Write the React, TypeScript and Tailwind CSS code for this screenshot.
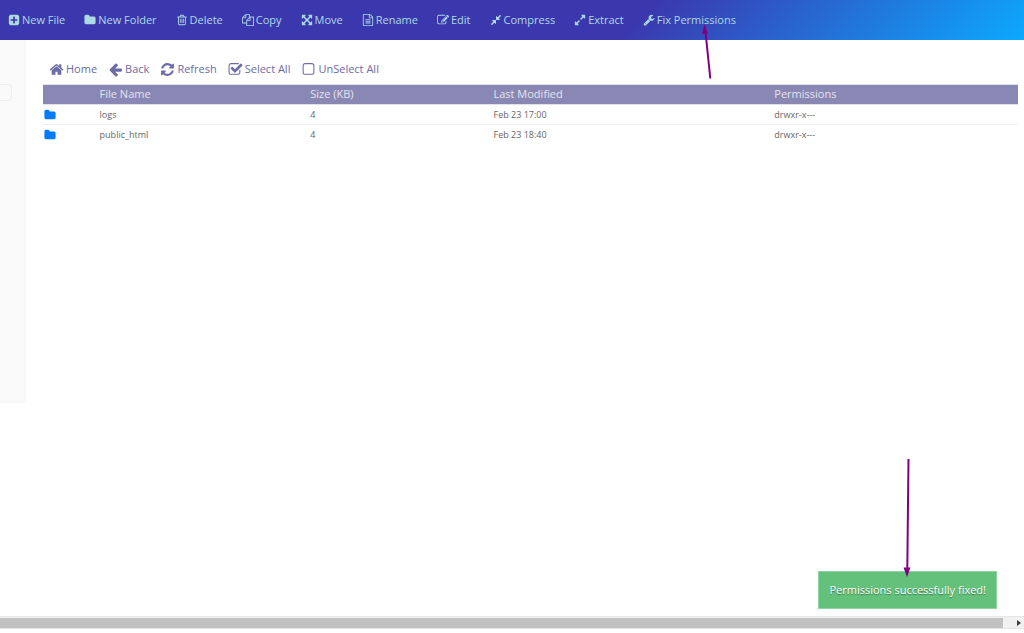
import { useState } from "react";

const paths = {
  plusSquare: "M1408 960v-128q0-26-19-45t-45-19h-320v-320q0-26-19-45t-45-19h-128q-26 0-45 19t-19 45v320h-320q-26 0-45 19t-19 45v128q0 26 19 45t45 19h320v320q0 26 19 45t45 19h128q26 0 45-19t19-45v-320h320q26 0 45-19t19-45zm256-544v960q0 119-84.5 203.5t-203.5 84.5h-960q-119 0-203.5-84.5t-84.5-203.5v-960q0-119 84.5-203.5t203.5-84.5h960q119 0 203.5 84.5t84.5 203.5z",
  folder: "M1728 608v704q0 92-66 158t-158 66h-1216q-92 0-158-66t-66-158v-960q0-92 66-158t158-66h320q92 0 158 66t66 158v32h672q92 0 158 66t66 158z",
  trash: "M704 736v576q0 14-9 23t-23 9h-64q-14 0-23-9t-9-23v-576q0-14 9-23t23-9h64q14 0 23 9t9 23zm256 0v576q0 14-9 23t-23 9h-64q-14 0-23-9t-9-23v-576q0-14 9-23t23-9h64q14 0 23 9t9 23zm256 0v576q0 14-9 23t-23 9h-64q-14 0-23-9t-9-23v-576q0-14 9-23t23-9h64q14 0 23 9t9 23zm128 724v-948h-896v948q0 22 7 40.5t14.5 27 10.5 8.5h832q3 0 10.5-8.5t14.5-27 7-40.5zm-672-1076h448l-48-117q-7-9-17-11h-317q-10 2-17 11zm928 32v64q0 14-9 23t-23 9h-96v948q0 83-47 143.5t-113 60.5h-832q-66 0-113-58.5t-47-141.5v-952h-96q-14 0-23-9t-9-23v-64q0-14 9-23t23-9h309l70-167q15-37 54-63t79-26h320q40 0 79 26t54 63l70 167h309q14 0 23 9t9 23z",
  copy: "M1696 384q40 0 68 28t28 68v1216q0 40-28 68t-68 28h-960q-40 0-68-28t-28-68v-288h-544q-40 0-68-28t-28-68v-672q0-40 20-88t48-76l408-408q28-28 76-48t88-20h416q40 0 68 28t28 68v328q68-40 128-40h416zm-544 213l-299 299h299v-299zm-640-384l-299 299h299v-299zm196 647l316-316v-416h-384v416q0 40-28 68t-68 28h-416v640h512v-256q0-40 20-88t48-76zm956 804v-1152h-384v416q0 40-28 68t-68 28h-416v640h896z",
  move: "M1411 541l-355 355 355 355 144-144q29-31 70-14 39 17 39 59v448q0 26-19 45t-45 19h-448q-42 0-59-40-17-39 14-69l144-144-355-355-355 355 144 144q31 30 14 69-17 40-59 40h-448q-26 0-45-19t-19-45v-448q0-42 40-59 39-17 69 14l144 144 355-355-355-355-144 144q-19 19-45 19-12 0-24-5-40-17-40-59v-448q0-26 19-45t45-19h448q42 0 59 40 17 39-14 69l-144 144 355 355 355-355-144-144q-31-30-14-69 17-40 59-40h448q26 0 45 19t19 45v448q0 42-39 59-13 5-25 5-26 0-45-19z",
  fileText: "M1596 380q28 28 48 76t20 88v1152q0 40-28 68t-68 28h-1344q-40 0-68-28t-28-68v-1600q0-40 28-68t68-28h896q40 0 88 20t76 48zm-444-244v376h376q-10-29-22-41l-313-313q-12-12-41-22zm384 1528v-1024h-416q-40 0-68-28t-28-68v-416h-768v1536h1280zm-1024-864q0-14 9-23t23-9h704q14 0 23 9t9 23v64q0 14-9 23t-23 9h-704q-14 0-23-9t-9-23v-64zm736 224q14 0 23 9t9 23v64q0 14-9 23t-23 9h-704q-14 0-23-9t-9-23v-64q0-14 9-23t23-9h704zm0 256q14 0 23 9t9 23v64q0 14-9 23t-23 9h-704q-14 0-23-9t-9-23v-64q0-14 9-23t23-9h704z",
  edit: "M888 1184l116-116-152-152-116 116v56h96v96h56zm440-720q-16-16-33 1l-350 350q-17 17-1 33t33-1l350-350q17-17 1-33zm80 594v190q0 119-84.5 203.5t-203.5 84.5h-832q-119 0-203.5-84.5t-84.5-203.5v-832q0-119 84.5-203.5t203.5-84.5h832q63 0 117 25 15 7 18 23 3 17-9 29l-49 49q-14 14-32 8-23-6-45-6h-832q-66 0-113 47t-47 113v832q0 66 47 113t113 47h832q66 0 113-47t47-113v-126q0-13 9-22l64-64q15-15 35-7t20 29zm-96-738l288 288-672 672h-288v-288zm444 132l-92 92-288-288 92-92q28-28 68-28t68 28l152 152q28 28 28 68t-28 68z",
  compress: "M896 960v448q0 26-19 45t-45 19-45-19l-144-144-332 332q-10 10-23 10t-23-10l-114-114q-10-10-10-23t10-23l332-332-144-144q-19-19-19-45t19-45 45-19h448q26 0 45 19t19 45zm755-672q0 13-10 23l-332 332 144 144q19 19 19 45t-19 45-45 19h-448q-26 0-45-19t-19-45v-448q0-26 19-45t45-19 45 19l144 144 332-332q10-10 23-10t23 10l114 114q10 10 10 23z",
  expand: "M883 1056q0 13-10 23l-332 332 144 144q19 19 19 45t-19 45-45 19h-448q-26 0-45-19t-19-45v-448q0-26 19-45t45-19 45 19l144 144 332-332q10-10 23-10t23 10l114 114q10 10 10 23zm781-864v448q0 26-19 45t-45 19-45-19l-144-144-332 332q-10 10-23 10t-23-10l-114-114q-10-10-10-23t10-23l332-332-144-144q-19-19-19-45t19-45 45-19h448q26 0 45 19t19 45z",
  wrench: "M448 1472q0-26-19-45t-45-19-45 19-19 45 19 45 45 19 45-19 19-45zm644-420l-682 682q-37 37-90 37-52 0-91-37l-106-108q-38-36-38-90 0-53 38-91l681-681q39 98 114.5 173.5t173.5 114.5zm634-435q0 39-23 106-47 134-164.5 217.5t-258.5 83.5q-185 0-316.5-131.5t-131.5-316.5 131.5-316.5 316.5-131.5q58 0 121.5 16.5t107.5 46.5q16 11 16 28t-16 28l-293 169v224l193 107q5-3 79-48.5t135.5-81 70.5-35.5q15 0 23.5 10t8.5 25z",
  home: "M1472 992v480q0 26-19 45t-45 19h-384v-384h-256v384h-384q-26 0-45-19t-19-45v-480q0-1 .5-3t.5-3l575-474 575 474q1 2 1 6zm223-69l-62 74q-8 9-21 11h-3q-13 0-21-7l-692-577-692 577q-12 8-24 7-13-2-21-11l-62-74q-8-10-7-23.5t11-21.5l719-599q32-26 76-26t76 26l244 204v-195q0-14 9-23t23-9h192q14 0 23 9t9 23v408l219 182q10 8 11 21.5t-7 23.5z",
  back: "M1664 896v128q0 53-32.5 90.5t-84.5 37.5h-704l293 294q38 36 38 90t-38 90l-75 76q-37 37-90 37-52 0-91-37l-651-652q-37-37-37-90 0-52 37-91l651-650q38-38 91-38 52 0 90 38l75 74q38 38 38 91t-38 91l-293 293h704q52 0 84.5 37.5t32.5 90.5z",
  refresh: "M1639 1056q0 5-1 7-64 268-268 434.5t-478 166.5q-146 0-282.5-55t-243.5-157l-129 129q-19 19-45 19t-45-19-19-45v-448q0-26 19-45t45-19h448q26 0 45 19t19 45-19 45l-137 137q71 66 161 102t187 36q134 0 250-65t186-179q11-17 53-117 8-23 30-23h192q13 0 22.5 9.5t9.5 22.5zm25-800v448q0 26-19 45t-45 19h-448q-26 0-45-19t-19-45 19-45l138-138q-148-137-349-137-134 0-250 65t-186 179q-11 17-53 117-8 23-30 23h-199q-13 0-22.5-9.5t-9.5-22.5v-7q65-268 270-434.5t480-166.5q146 0 284 55.5t245 156.5l130-129q19-19 45-19t45 19 19 45z",
  checkSquare: "M1472 930v318q0 119-84.5 203.5t-203.5 84.5h-832q-119 0-203.5-84.5t-84.5-203.5v-832q0-119 84.5-203.5t203.5-84.5h832q63 0 117 25 15 7 18 23 3 17-9 29l-49 49q-10 10-23 10-3 0-9-2-23-6-45-6h-832q-66 0-113 47t-47 113v832q0 66 47 113t113 47h832q66 0 113-47t47-113v-254q0-13 9-22l64-64q10-10 23-10 6 0 12 3 20 8 20 29zm231-489l-814 814q-24 24-57 24t-57-24l-430-430q-24-24-24-57t24-57l110-110q24-24 57-24t57 24l263 263 647-647q24-24 57-24t57 24l110 110q24 24 24 57t-24 57z",
  square: "M1312 256h-832q-66 0-113 47t-47 113v832q0 66 47 113t113 47h832q66 0 113-47t47-113v-832q0-66-47-113t-113-47zm288 160v832q0 119-84.5 203.5t-203.5 84.5h-832q-119 0-203.5-84.5t-84.5-203.5v-832q0-119 84.5-203.5t203.5-84.5h832q119 0 203.5 84.5t84.5 203.5z",
};

type IconName = keyof typeof paths;

const menu: { icon: IconName; label: string }[] = [
  { icon: "plusSquare", label: "New File" },
  { icon: "folder", label: "New Folder" },
  { icon: "trash", label: "Delete" },
  { icon: "copy", label: "Copy" },
  { icon: "move", label: "Move" },
  { icon: "fileText", label: "Rename" },
  { icon: "edit", label: "Edit" },
  { icon: "compress", label: "Compress" },
  { icon: "expand", label: "Extract" },
  { icon: "wrench", label: "Fix Permissions" },
];

const tools: { icon: IconName; label: string }[] = [
  { icon: "home", label: "Home" },
  { icon: "back", label: "Back" },
  { icon: "refresh", label: "Refresh" },
  { icon: "checkSquare", label: "Select All" },
  { icon: "square", label: "UnSelect All" },
];

const files = [
  { name: "logs", size: 4, modified: "Feb 23 17:00", permissions: "drwxr-x---" },
  { name: "public_html", size: 4, modified: "Feb 23 18:40", permissions: "drwxr-x---" },
];

function Icon({ name, className }: { name: IconName; className: string }) {
  return (
    <svg viewBox="0 0 1792 1792" fill="currentColor" aria-hidden="true" className={className}>
      <path d={paths[name]} />
    </svg>
  );
}

export default function App() {
  const [path, setPath] = useState("");

  return (
    <div className="relative flex min-h-screen flex-col bg-white font-['Open_Sans','Noto_Sans',sans-serif] text-[11px]">
      <nav className="flex h-10 items-center gap-[19px] bg-[linear-gradient(135deg,#3b38ae_0%,#3b38ae_62%,#0ca9ff_100%)] px-2 text-[#add8e6]">
        {menu.map((item) => (
          <button key={item.label} type="button" className="flex items-center gap-0.5 whitespace-nowrap">
            <Icon name={item.icon} className="size-3" />
            {item.label}
          </button>
        ))}
      </nav>

      <div className="flex flex-1 items-start">
        <aside className="h-[363px] w-[26px] shrink-0 bg-[#f9f9f9] pt-11">
          <input
            type="text"
            aria-label="Path"
            value={path}
            onChange={(e) => setPath(e.target.value)}
            className="block h-[17px] w-3 rounded-r-sm border border-l-0 border-[#efefef]"
          />
        </aside>

        <main className="min-w-0 flex-1 pr-1.5 pl-[17px]">
          <div className="flex h-11 items-center gap-[11px] px-1.5 pt-3.5 text-[#6c6ba6]">
            {tools.map((tool) => (
              <button key={tool.label} type="button" className="flex items-center gap-0.5 whitespace-nowrap">
                <Icon name={tool.icon} className="size-[15px]" />
                {tool.label}
              </button>
            ))}
          </div>

          <table className="w-full table-fixed border-collapse text-left">
            <thead>
              <tr className="h-5 border-y border-[#dee2e6] bg-[#8988b5] text-[#e4e4ee]">
                <th className="w-[5.6%] p-0" aria-label="Type" />
                <th className="w-[21.6%] px-0.5 py-0 font-normal">File Name</th>
                <th className="w-[18.8%] px-0.5 py-0 font-normal">Size (KB)</th>
                <th className="w-[28.8%] px-0.5 py-0 font-normal">Last Modified</th>
                <th className="px-0.5 py-0 font-normal">Permissions</th>
              </tr>
            </thead>
            <tbody className="text-[9px] text-[#666]">
              {files.map((file) => (
                <tr key={file.name} className="h-5 border-b border-[#eceef0] last:border-b-0">
                  <td className="py-0 pr-0 pl-px">
                    <Icon name="folder" className="size-3 text-[#007bff]" />
                  </td>
                  <td className="px-0.5 py-0">{file.name}</td>
                  <td className="px-0.5 py-0">{file.size}</td>
                  <td className="px-0.5 py-0">{file.modified}</td>
                  <td className="px-0.5 py-0">{file.permissions}</td>
                </tr>
              ))}
            </tbody>
          </table>
        </main>
      </div>

      <div
        role="status"
        className="absolute right-[27px] bottom-6 border border-[#8fd3a1] bg-[#64c17b] px-2.5 py-2.5 text-white [text-shadow:0_1px_1px_#0006]"
      >
        Permissions successfully fixed!
      </div>

      {/* pointers to the clicked action and its result */}
      <svg viewBox="0 0 12 56" className="absolute top-6 left-[701px] h-14 w-3" aria-hidden="true">
        <path d="M9.3 54.5 4.5 8" stroke="#800080" strokeWidth="2" />
        <path d="M3.5 0 7 9.5 1 10z" fill="#800080" />
      </svg>
      <svg viewBox="0 0 12 120" className="absolute right-[111px] bottom-14 h-[120px] w-3" aria-hidden="true">
        <path d="M7.5 2 6.3 112" stroke="#800080" strokeWidth="2" />
        <path d="M6 120 2.500 110.500h7z" fill="#800080" />
      </svg>

      <div className="mb-1 flex h-[13px] items-center border-y border-[#e6e6e6] bg-[#f1f1f1]">
        <div className="h-2.5 flex-1 bg-[#c1c1c1]" />
        <button type="button" aria-label="Scroll right" className="flex h-2.5 w-[21px] items-center justify-end pr-[3px]">
          <svg viewBox="0 0 4 6" className="h-1.5 w-1" aria-hidden="true">
            <path d="M0 0 4 3 0 6z" fill="#404040" />
          </svg>
        </button>
      </div>
    </div>
  );
}
